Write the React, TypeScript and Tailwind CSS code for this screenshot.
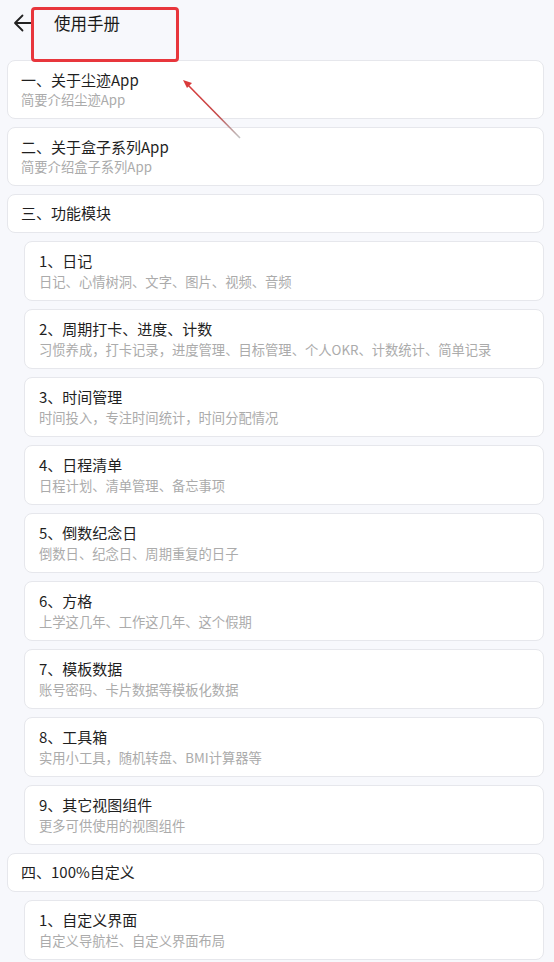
import React from "react";

const subs = [
  ["1、日记", "日记、心情树洞、文字、图片、视频、音频"],
  ["2、周期打卡、进度、计数", "习惯养成，打卡记录，进度管理、目标管理、个人OKR、计数统计、简单记录"],
  ["3、时间管理", "时间投入，专注时间统计，时间分配情况"],
  ["4、日程清单", "日程计划、清单管理、备忘事项"],
  ["5、倒数纪念日", "倒数日、纪念日、周期重复的日子"],
  ["6、方格", "上学这几年、工作这几年、这个假期"],
  ["7、模板数据", "账号密码、卡片数据等模板化数据"],
  ["8、工具箱", "实用小工具，随机转盘、BMI计算器等"],
  ["9、其它视图组件", "更多可供使用的视图组件"],
];

function Card({ title, sub }: { title: string; sub: string }) {
  return (
    <div className="h-[59px] bg-white border border-[#e6e7ec] rounded-[8px] pl-[13px] pt-[9px]">
      <div className="text-[15px] leading-[20px] text-[#1f1f1f]">{title}</div>
      <div className="text-[13.3px] leading-[18px] text-[#ababab] mt-[1px]">{sub}</div>
    </div>
  );
}

function Sub({ title, sub }: { title: string; sub: string }) {
  return (
    <div className="ml-[17px] h-[60px] bg-white border border-[#e6e7ec] rounded-[8px] pl-[14px] pt-[9px]">
      <div className="text-[15px] leading-[20px] text-[#1f1f1f]">{title}</div>
      <div className="text-[13.3px] leading-[18px] text-[#ababab] mt-[2px]">{sub}</div>
    </div>
  );
}

function Section({ title }: { title: string }) {
  return (
    <div className="h-[39px] bg-white border border-[#e6e7ec] rounded-[8px] pl-[13px] flex items-center text-[15px] text-[#1f1f1f]">
      {title}
    </div>
  );
}

export default function App() {
  return (
    <div
      className="relative w-[554px] h-[962px] overflow-hidden bg-[#f7f8fc]"
      style={{ fontFamily: '"Noto Sans CJK SC", "Noto Sans", sans-serif' }}
    >
      <div className="h-[60px] flex items-start pt-[12px] pl-[13px]">
        <svg width="19" height="20" viewBox="0 0 19 20" className="mt-[1px]">
          <path d="M17.5 10H2.5M9.5 2.5L2 10l7.5 7.5" fill="none" stroke="#222" strokeWidth="1.8" strokeLinecap="round" strokeLinejoin="round" />
        </svg>
        <div className="ml-[22px] text-[16.5px] leading-[22px] text-[#1a1a1a]">使用手册</div>
      </div>
      <div className="flex flex-col gap-2 pl-[7px] pr-[10px]">
        <Card title="一、关于尘迹App" sub="简要介绍尘迹App" />
        <Card title="二、关于盒子系列App" sub="简要介绍盒子系列App" />
        <Section title="三、功能模块" />
        {subs.map(([t, s]) => (
          <Sub key={t} title={t} sub={s} />
        ))}
        <Section title="四、100%自定义" />
        <Sub title="1、自定义界面" sub="自定义导航栏、自定义界面布局" />
      </div>

      <div className="absolute left-[31px] top-[7px] w-[148px] h-[55px] border-[3px] border-[#e8363c] rounded-[4px]" />
      <svg className="absolute left-[178px] top-[74px]" width="70" height="70" viewBox="0 0 70 70">
        <defs>
          <linearGradient id="g" x1="0" y1="0" x2="1" y2="1">
            <stop offset="0" stopColor="#d93a3a" />
            <stop offset="0.6" stopColor="#c44a4a" />
            <stop offset="1" stopColor="#9a9a9a" stopOpacity="0.6" />
          </linearGradient>
        </defs>
        <line x1="8" y1="9" x2="62" y2="64" stroke="url(#g)" strokeWidth="1.6" />
        <polygon points="5,6 14,9 9,14" fill="#d93a3a" />
      </svg>
    </div>
  );
}
